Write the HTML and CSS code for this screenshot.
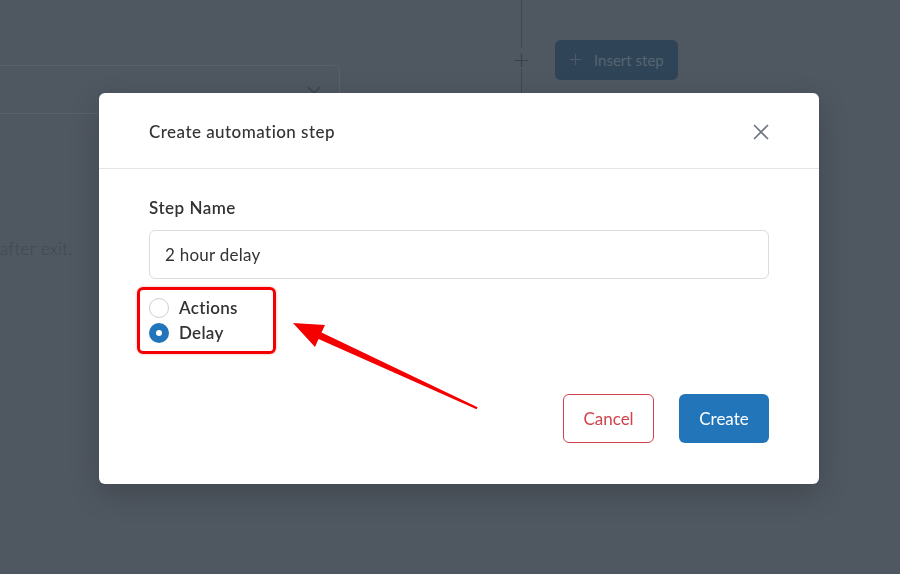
FILE: index.html
```html
<!DOCTYPE html>
<html lang="en">
<head>
    <meta charset="UTF-8">
    <meta name="viewport" content="width=device-width, initial-scale=1.0">
    <title>Create automation step</title>
    <link rel="stylesheet" href="styles.css">
</head>
<body>
    <div class="page">
        <div class="left-panel">
            <div class="select-box">
                <svg class="chevron" width="14" height="8" viewBox="0 0 14 8"><path d="M1 1l6 6 6-6" fill="none" stroke="#3c444c" stroke-width="1.3"/></svg>
            </div>
            <p class="panel-text">after exit.</p>
        </div>
        <div class="flow-column">
            <div class="flow-line top"></div>
            <div class="flow-row">
                <svg class="flow-plus" width="13" height="13" viewBox="0 0 13 13"><path d="M6.5 0v13M0 6.5h13" stroke="#3a4249" stroke-width="1.2"/></svg>
                <button class="insert-btn"><svg class="insert-plus" width="11" height="11" viewBox="0 0 11 11"><path d="M5.5 0v11M0 5.5h11" stroke="#4c5a67" stroke-width="1.2"/></svg><span>Insert step</span></button>
            </div>
            <div class="flow-line bottom"></div>
        </div>
    </div>

    <div class="overlay">
        <div class="modal">
            <div class="modal-header">
                <h3 class="modal-title">Create automation step</h3>
                <svg class="close-icon" width="16" height="16" viewBox="0 0 16 16"><path d="M1 1l14 14M15 1L1 15" stroke="#6c757d" stroke-width="1.6"/></svg>
            </div>
            <div class="modal-body">
                <label class="field-label">Step Name</label>
                <div class="text-input">2 hour delay</div>
                <div class="radio-group">
                    <div class="radio-row">
                        <span class="radio"></span>
                        <span class="radio-label">Actions</span>
                    </div>
                    <div class="radio-row">
                        <span class="radio checked"></span>
                        <span class="radio-label">Delay</span>
                    </div>
                    <span class="highlight-box"></span>
                </div>
            </div>
            <div class="modal-footer">
                <button class="btn btn-cancel">Cancel</button>
                <button class="btn btn-create">Create</button>
            </div>
        </div>
    </div>

    <svg class="annotation-arrow" width="900" height="574" viewBox="0 0 900 574">
        <polygon points="293,323 325,325 321.5,332.5 477.6,407.2 476.6,409.2 318.5,339 315,347" fill="#f40000"/>
    </svg>
</body>
</html>
```

FILE: styles.css
```css
* {
    box-sizing: border-box;
}

body {
    margin: 0;
    width: 900px;
    height: 574px;
    overflow: hidden;
    background-color: #4f5760;
    font-family: 'Lato', 'Segoe UI', sans-serif;
    color: #333;
}

/* background page (under overlay) */
.page {
    display: flex;
    height: 574px;
}

.left-panel {
    width: 340px;
    padding-top: 65px;
}

.select-box {
    height: 49px;
    border: 1px solid #59616a;
    border-left: none;
    border-radius: 0 6px 0 0;
    display: flex;
    justify-content: flex-end;
    align-items: center;
    padding: 0 18px 0 0;
}

.panel-text {
    margin: 124px 0 0;
    font-size: 17px;
    font-weight: 300;
    letter-spacing: 0.3px;
    color: #3f4750;
}

.flow-column {
    margin-left: 174px;
    display: flex;
    flex-direction: column;
}

.flow-line {
    width: 1px;
    background: #3e464e;
    margin-left: 7px;
}

.flow-line.top {
    height: 48px;
}

.flow-line.bottom {
    height: 24px;
}

.flow-row {
    display: flex;
    align-items: center;
    height: 21px;
    overflow: visible;
}

.flow-plus {
    margin: 3px 0 0 1px;
    flex-shrink: 0;
}

.insert-btn {
    margin-left: 27px;
    margin-top: 2px;
    height: 40px;
    width: 123px;
    flex-shrink: 0;
    border: none;
    border-radius: 6px;
    background: #2f4456;
    color: #566472;
    font-family: inherit;
    font-size: 15px;
    white-space: nowrap;
    display: flex;
    align-items: center;
    padding: 0 10px 0 15px;
    gap: 13px;
}

.insert-plus {
    flex-shrink: 0;
}

/* modal */
.overlay {
    position: fixed;
    inset: 0;
    padding: 93px 0 0 99px;
}

.modal {
    width: 720px;
    height: 391px;
    background: #fff;
    border-radius: 6px;
    box-shadow: 0 10px 30px rgba(0, 0, 0, 0.18);
    display: flex;
    flex-direction: column;
}

.modal-header {
    height: 76px;
    border-bottom: 1px solid #e5e5e5;
    display: flex;
    align-items: center;
    justify-content: space-between;
    padding: 2px 50px 0;
}

.modal-title {
    margin: 0;
    font-size: 17px;
    font-weight: 500;
    letter-spacing: 0.45px;
    color: #333;
}

.modal-body {
    padding: 27px 50px 0;
    display: flex;
    flex-direction: column;
}

.field-label {
    font-size: 17px;
    font-weight: 600;
    line-height: 24px;
    letter-spacing: 0.5px;
    color: #333;
}

.text-input {
    margin-top: 10px;
    height: 49px;
    border: 1px solid #dcdcdc;
    border-radius: 6px;
    padding: 0 15px;
    display: flex;
    align-items: center;
    font-size: 17px;
    letter-spacing: 0.25px;
    color: #333;
}

.radio-group {
    position: relative;
    margin-top: 16px;
    width: 120px;
}

.radio-row {
    display: flex;
    align-items: center;
    height: 25px;
    gap: 10px;
}

.radio {
    width: 20px;
    height: 20px;
    border-radius: 50%;
    border: 1px solid #cfcfcf;
}

.radio.checked {
    border: none;
    background: #2175bb;
    display: flex;
    align-items: center;
    justify-content: center;
}

.radio.checked::after {
    content: '';
    width: 6px;
    height: 6px;
    border-radius: 50%;
    background: #fff;
}

.radio-label {
    font-size: 17px;
    font-weight: 600;
    letter-spacing: 0.3px;
    color: #333;
}

.highlight-box {
    position: absolute;
    left: -12px;
    top: -8px;
    width: 139px;
    height: 67px;
    border: 3px solid #f40000;
    border-radius: 6px;
    box-shadow: 0 0 3px rgba(200, 0, 0, 0.3);
}

.modal-footer {
    margin-top: auto;
    padding: 0 50px 41px;
    display: flex;
    justify-content: flex-end;
    gap: 25px;
}

.btn {
    height: 49px;
    border-radius: 6px;
    font-family: inherit;
    font-size: 17px;
    padding: 0 0 1px;
}

.btn-cancel {
    width: 91px;
    background: #fff;
    border: 1px solid #d2434c;
    color: #d2434c;
}

.btn-create {
    width: 90px;
    background: #2175b8;
    border: none;
    color: #fff;
}

.annotation-arrow {
    position: fixed;
    left: 0;
    top: 0;
    pointer-events: none;
}
```
